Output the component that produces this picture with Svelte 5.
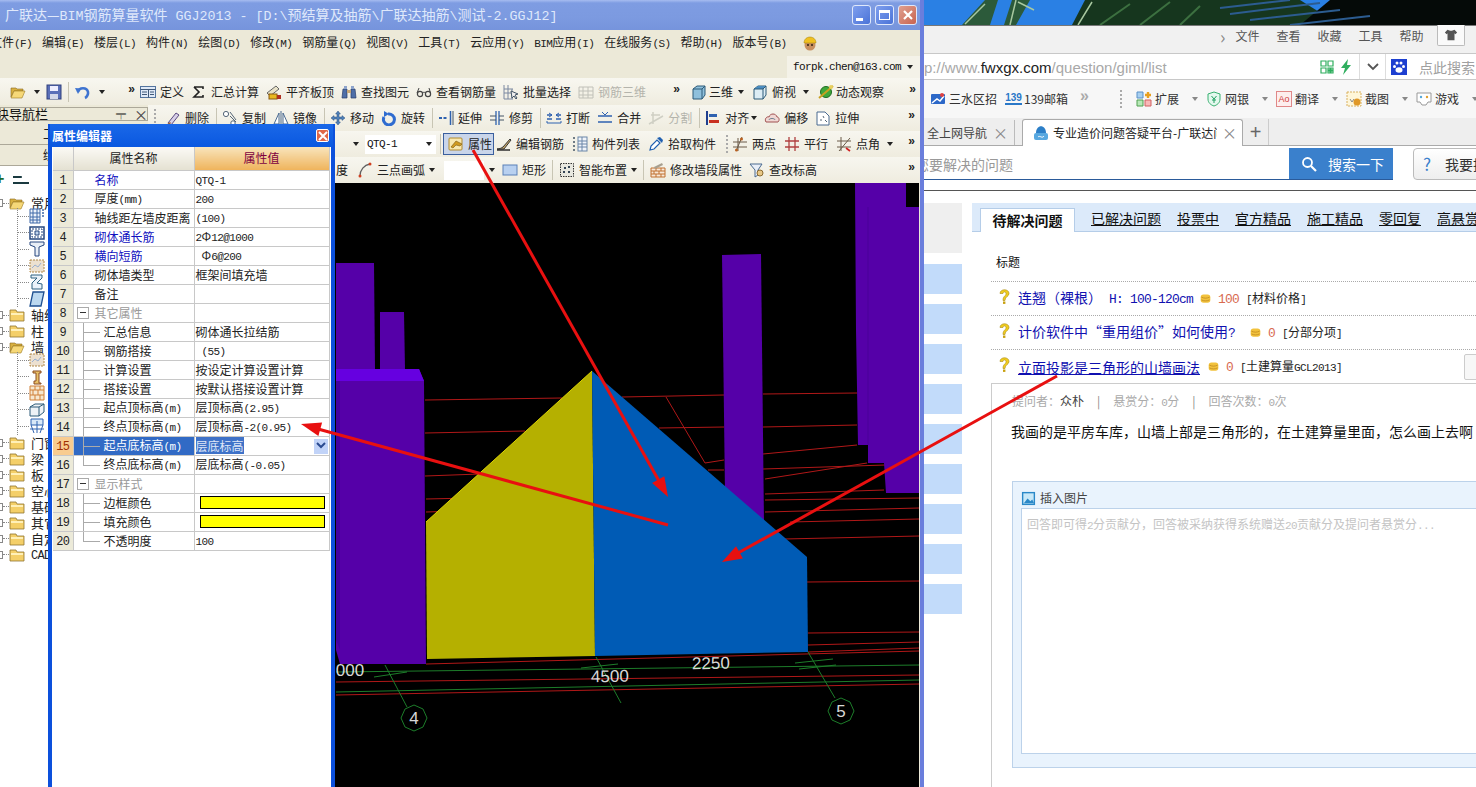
<script>
  const icons = {
    folder: '<path d="M1 4h5l1 1h6v2H4L1 13z" fill="#d8b040" stroke="#8a6a20" stroke-width=".6"/><path d="M1 14l3-7h11l-3 7z" fill="#f6d878" stroke="#9a7820" stroke-width=".6"/>',
    closed: '<path d="M1 3h6l1 2h7v9H1z" fill="#f4cf68" stroke="#8f7530" stroke-width=".8"/><path d="M2 6h12v2H2z" fill="#fff0b8"/>',
    save: '<rect x="1" y="1" width="14" height="14" fill="#5a6fb8" stroke="#30407c"/><rect x="4" y="2" width="8" height="5" fill="#eef"/><rect x="4" y="10" width="8" height="5" fill="#d4d8e8"/>',
    undo: '<path d="M3 8c1-5 9-5 10 0 .4 2-1 5-3 6" fill="none" stroke="#3f74d0" stroke-width="2.6"/><path d="M0 4l6 .5L3 10z" fill="#3f74d0"/>',
    define: '<rect x=".5" y="2.5" width="15" height="11" fill="#dfe9f7" stroke="#54749e"/><path d="M.5 5.5h15M8.5 5.5v8M10 8h4M10 10.5h4M2 8h5M2 10.5h5" stroke="#3f5878"/>',
    sigma: '<path d="M3 3h9v2M3 3l5 5-5 5h9v-2" fill="none" stroke="#222" stroke-width="1.6"/>',
    level: '<path d="M1 9l9-7 3 3-9 7z" fill="#e8e2c8" stroke="#666"/><rect x="3" y="10" width="8" height="5" fill="#e8b820" stroke="#8a5a10"/><rect x="11" y="11" width="4" height="4" fill="#b03020"/>',
    binoc: '<path d="M2 5h4v9H1zM10 5h4l1 9h-5z" fill="#4f6fa8" stroke="#283c68" stroke-width=".7"/><rect x="3" y="2" width="3" height="3" fill="#8ea4cc"/><rect x="10" y="2" width="3" height="3" fill="#8ea4cc"/><rect x="6" y="6" width="4" height="3" fill="#c8a878"/>',
    glasses: '<circle cx="4" cy="10" r="2.6" fill="none" stroke="#444" stroke-width="1.2"/><circle cx="12" cy="10" r="2.6" fill="none" stroke="#444" stroke-width="1.2"/><path d="M6.5 9c1-1 2-1 3 0M1 9l2-5M14.5 9L13 4" fill="none" stroke="#444"/>',
    batch: '<path d="M1 1v14h9M1 5h9M1 9h9M5 1v14M9 5v10" fill="none" stroke="#7a88a0"/><path d="M8 7l7 3-3 1 2 3-1 1-2-3-2 2z" fill="#eee" stroke="#456"/>',
    grid3d: '<path d="M1 3v11h14V3zM1 7h14M1 11h14M5 3v11M10 3v11" fill="none" stroke="#c0c0b8"/>',
    cube: '<path d="M2 5l4-3h8v9l-3 4H2z" fill="#8fc0dc" stroke="#2c5a78"/><path d="M2 5h9v10M11 5l3-3" fill="none" stroke="#2c5a78"/>',
    cubetop: '<path d="M2 5l4-3h8v9l-3 4H2z" fill="#dcecf4" stroke="#2c5a78"/><path d="M2 5l4-3h8l-3 3z" fill="#4a8cc0"/><path d="M2 5h9v10M11 5l3-3" fill="none" stroke="#2c5a78"/>',
    orbit: '<circle cx="8" cy="8" r="5.5" fill="#3fa83a" stroke="#1f6c20"/><path d="M1 14L15 2" stroke="#c8a020" stroke-width="2"/><circle cx="13" cy="3" r="2" fill="#e8d060"/>',
    erase: '<path d="M3 13l8-10 3 2-8 10z" fill="#d8d0e8" stroke="#5a4a80"/><path d="M1 15l4-3 1 1-3 3z" fill="#a06030"/>',
    copy: '<circle cx="4" cy="4" r="2.6" fill="#fff" stroke="#567"/><path d="M8 6l6 6M8 2l6 8" stroke="#567" fill="none"/><circle cx="11" cy="13" r="2.2" fill="#fff" stroke="#567"/>',
    mirror: '<path d="M1 14L6 3v11zM15 14L10 3v11z" fill="#fff" stroke="#4a6a90"/><path d="M8 1v14" stroke="#4a6a90"/>',
    move: '<path d="M8 1l2.4 3H9v3h3V5.6L15 8l-3 2.4V9H9v3h1.4L8 15l-2.4-3H7V9H4v1.4L1 8l3-2.4V7h3V4H5.600z" fill="#4f80b8" stroke="#2c5080" stroke-width=".5"/>',
    rotate: '<path d="M3 7a5.500 5.500 0 1 0 4-3" fill="none" stroke="#2f6cd0" stroke-width="3"/><path d="M3 1l5 3-5 3z" fill="#2f6cd0"/>',
    extend: '<path d="M1 8h9" stroke="#2f62b0" stroke-width="2" stroke-dasharray="3 1.500"/><path d="M12.500 1v14" stroke="#2f62b0" stroke-width="1.500"/><path d="M15 1v14" stroke="#456" />',
    trim: '<path d="M7 1v14M10 1v14" stroke="#2f62b0" stroke-width="1.300"/><path d="M1 6h6M1 10h6M10 6h5M10 10h5" stroke="#456"/>',
    split: '<path d="M1 13h14M1 13v-2M15 13v-2" stroke="#2f62b0" fill="none"/><path d="M1 5h5M10 5h5M1 9h5M10 9h5" stroke="#2f62b0" stroke-width="1.500"/><path d="M3 3l3 2-3 2M13 3l-3 2 3 2" stroke="#2f62b0" fill="none"/>',
    merge: '<path d="M1 6h14M1 12h14" stroke="#2f62b0" stroke-width="1.500"/><path d="M5 2l3 3 3-3" stroke="#2f62b0" fill="none"/>',
    cut: '<path d="M1 14l14-8M3 5h9M5 2v12" stroke="#cfcfc4" stroke-width="1.500" fill="none"/>',
    align: '<path d="M2 1v14" stroke="#1f3f8f" stroke-width="2"/><path d="M4 4h8v3H4z" fill="#2f62b0"/><path d="M4 10h10v3H4z" fill="#c83020"/>',
    offset: '<path d="M2 12c-2-3 1-6 3-5 1-4 7-4 8 0 2 0 3 3 1 5z" fill="#f0d8d4" stroke="#a05050"/><path d="M5 10c0-2 6-2 6 0" fill="none" stroke="#708090"/>',
    stretch: '<path d="M2 2h8l4 4v9H2z" fill="#fff" stroke="#4a6a90"/><path d="M8 6l1 2M10 10l2 2M5 10h2" stroke="#567"/>',
    prop: '<rect x="1" y="2" width="13" height="12" rx="1" fill="#f8e8b0" stroke="#b08a30"/><path d="M3 11l5-6 6 3-2 2-4-1-3 3z" fill="#d09a20" stroke="#7a5a10" stroke-width=".6"/>',
    bar: '<path d="M1 13c3 0 4-1 6-2l7-8 1 1-7 9z" fill="#c8a868" stroke="#333"/><path d="M1 14h13" stroke="#222" stroke-width="1.400"/>',
    list: '<path d="M1 2h2M1 6h2M1 10h2M1 14h2" stroke="#456" stroke-width="1.500"/><rect x="6" y="1" width="9" height="14" fill="#f0f4fa" stroke="#6a86a8"/><path d="M6 5h9M6 8h9M6 11h9M10 1v14" stroke="#6a86a8"/>',
    pick: '<path d="M2 14l1-4 6-6 3 3-6 6z" fill="#fff" stroke="#1f5fb0" stroke-width="1.200"/><path d="M9 2l5 5 1-3-3-3z" fill="#1f5fb0"/>',
    two: '<path d="M1 11h14M1 6h14M6 2v13M10 1L4 15" stroke="#6a5a48" fill="none"/><circle cx="9.500" cy="3" r="1.500" fill="#b86020"/><circle cx="4.500" cy="14" r="1.500" fill="#b86020"/>',
    parallel: '<path d="M1 5h14M1 11h14M5 1v14M11 1v14" stroke="#b04040" stroke-width="1.300" fill="none"/>',
    angle: '<path d="M1 5h14M1 11h14M5 1v14M14 2L3 15" stroke="#6a5a48" fill="none"/><path d="M10 12l4 3" stroke="#d02020" stroke-width="1.600"/>',
    arc: '<path d="M3 14C3 8 7 3 13 2" fill="none" stroke="#606060" stroke-width="1.300"/><circle cx="3" cy="14" r="1.500" fill="#d04020"/><circle cx="13" cy="2" r="1.500" fill="#d04020"/>',
    rect: '<rect x="1" y="3" width="14" height="10" fill="#b8d0f0" stroke="#5a80b8"/>',
    smart: '<rect x="1.500" y="1.500" width="13" height="13" fill="#e8e8e0" stroke="#333" stroke-dasharray="1.500 1"/><path d="M5 5h2v2H5zM9 9h2v2H9zM9 4h2v2H9zM4 9h2v2H4z" fill="#345"/>',
    wall: '<path d="M1 6h14v9H1z" fill="#f8e8d8" stroke="#c07030"/><path d="M1 9h14M1 12h14M6 6v3M11 6v3M4 9v3M9 9v3M6 12v3M11 12v3" stroke="#c07030"/><path d="M4 5l8-4 1 2-8 4z" fill="#a8a090"/>',
    elev: '<path d="M1 2h12L9 8v5l-3 2V8z" fill="#e8eef8" stroke="#4a6a90"/><circle cx="11" cy="11" r="3" fill="#e8c888" stroke="#8a6a30"/>',
    grid: '<path d="M1 1h10v14H1zM1 5h10M1 9h10M1 12h10M4 1v14M8 1v14" fill="#eef3fb" stroke="#3f68a8"/><path d="M13 2h2M13 5h2M13 8h2" stroke="#3f68a8" stroke-width="1.500"/>',
    frame: '<path d="M1 2h14v12H1z" fill="none" stroke="#26477f" stroke-width="1.500"/><path d="M3 4h10v8H3z" fill="none" stroke="#26477f" stroke-dasharray="2 1"/><path d="M6 6h4v4H6z" fill="#c0d4ec" stroke="#26477f"/>',
    tee: '<path d="M1 1h14v3l-5 2v9H6V6L1 4z" fill="#e8eef6" stroke="#26477f"/>',
    brick: '<rect x="1" y="2" width="14" height="12" fill="#ece0d0" stroke="#b08848" stroke-dasharray="2 1"/><path d="M3 10l3-3 3 2 3-4" stroke="#9ab0d0" fill="none"/>',
    zig: '<path d="M2 1h11v3L8 9l5 1v5H3V9l5-5H2z" fill="#eaf2fa" stroke="#2c6080"/>',
    slab: '<path d="M4 1h11l-3 14H1z" fill="#bcd8f0" stroke="#1f4f90" stroke-width="1.300"/>',
    pillar: '<path d="M4 2h8v2h-2v10h2v1H5v-3h2V4H4z" fill="#e8c068" stroke="#8a4a20"/>',
    bricks: '<path d="M1 1h14v14H1z" fill="#f6e8d0" stroke="#d08038"/><path d="M1 5h14M1 10h14M6 1v4M11 1v4M4 5v5M9 5v5M6 10v5M11 10v5" stroke="#d08038"/>',
    box: '<path d="M1 5l5-3h9v8l-5 4H1z" fill="#eef2f6" stroke="#2c5a78"/><path d="M1 5h9v9M10 5l5-3" fill="none" stroke="#2c5a78"/>',
    hole: '<path d="M2 1h12v6H2z" fill="#d8e8f8" stroke="#2f62b0"/><path d="M2 7l3 8M14 7l-3 8M1 11h14M8 3v12" stroke="#2f62b0" fill="none"/>',
    fav: '<rect x="1" y="3" width="14" height="10" rx="1" fill="#2c68c8"/><path d="M2 12l5-4 3 2 4-5" stroke="#fff" stroke-width="1.500" fill="none"/><circle cx="12" cy="4" r="2" fill="#e04040"/>',
    ext: '<path d="M1 1h6v6H1z" fill="#a8d0f0" stroke="#5a90c8"/><path d="M9 9h6v6H9z" fill="#f8b8b8" stroke="#d06060"/><path d="M1 9h6v6H1z" fill="#b8e8b8" stroke="#50a050"/><path d="M12 1v6M9 4h6" stroke="#e8a020" stroke-width="2.400"/>',
    shield: '<path d="M8 1l6 2v5c0 4-3 6-6 7-3-1-6-3-6-7V3z" fill="#e4f8ee" stroke="#38b070"/><path d="M5.500 5L8 8l2.500-3M8 8v4M6 9h4" stroke="#20a060" fill="none"/>',
    shot: '<rect x="1" y="1" width="14" height="14" fill="#fff6d8" stroke="#d8b060" stroke-dasharray="2 1"/><circle cx="11" cy="11" r="3.500" fill="#e09828"/><path d="M4 8l2 3 2-3" stroke="#888" fill="none"/>',
    game: '<path d="M1 2h14v9h-3l-2 3H6l-2-3H1z" fill="#fff" stroke="#999"/><circle cx="5" cy="6" r="1.200" fill="#58a8d8"/><circle cx="11" cy="6" r="1.200" fill="#e0a030"/>',
    tabico: '<path d="M3 8c0-9 10-9 10 0z" fill="#2c7fc8"/><rect x="1" y="8" width="14" height="7" rx="2" fill="#58a8e0"/><path d="M5 12c2-2 4 2 6-1" stroke="#fff" fill="none"/>',
    picture: '<rect x="1" y="1" width="14" height="14" fill="#2a88c8"/><rect x="2.500" y="2.500" width="11" height="11" fill="#c8e8f8"/><path d="M3 13l4-5 3 3 2-2 2 4z" fill="#2a88c8"/>',
    coin: '<rect x="1" y="2" width="14" height="12" rx="4" fill="#f2c23c"/><path d="M2 6c4 2 8 2 12 0M2 10c4 2 8 2 12 0" stroke="#b8801c" fill="none"/>',
    q: '<path d="M4 5c0-5 9-5 9 0 0 3-4 3-4 7H7c0-5 3-4 3-7 0-2-3-2-3 0z" fill="#f0cc20" stroke="#a88810" stroke-width=".6"/><rect x="7" y="13" width="2.400" height="2.400" fill="#c8a010"/>'
  };

  const menus = ['文件(F)', '编辑(E)', '楼层(L)', '构件(N)', '绘图(D)', '修改(M)', '钢筋量(Q)', '视图(V)', '工具(T)', '云应用(Y)', 'BIM应用(I)', '在线服务(S)', '帮助(H)', '版本号(B)'];

  const row3 = [
    { i: 'define', t: '定义' }, { i: 'sigma', t: '汇总计算' }, { i: 'level', t: '平齐板顶' }, { i: 'binoc', t: '查找图元' },
    { i: 'glasses', t: '查看钢筋量' }, { i: 'batch', t: '批量选择' }, { i: 'grid3d', t: '钢筋三维', off: true }
  ];
  const row4 = [
    { i: 'erase', t: '删除' }, { sep: true }, { i: 'copy', t: '复制' }, { i: 'mirror', t: '镜像' }, { sep: true },
    { i: 'move', t: '移动' }, { i: 'rotate', t: '旋转' }, { sep: true }, { i: 'extend', t: '延伸' }, { i: 'trim', t: '修剪' }, { sep: true },
    { i: 'split', t: '打断' }, { i: 'merge', t: '合并' }, { i: 'cut', t: '分割', off: true }, { sep: true },
    { i: 'align', t: '对齐', caret: true }, { i: 'offset', t: '偏移' }, { i: 'stretch', t: '拉伸' }
  ];
  const row5 = [
    { i: 'bar', t: '编辑钢筋' }, { i: 'list', t: '构件列表' }, { i: 'pick', t: '拾取构件' }, { dots: true },
    { i: 'two', t: '两点' }, { i: 'parallel', t: '平行' }, { i: 'angle', t: '点角', caret: true }
  ];
  const row6 = [
    { i: 'rect', t: '矩形' }, { sep: true }, { i: 'smart', t: '智能布置', caret: true }, { sep: true },
    { i: 'wall', t: '修改墙段属性' }, { i: 'elev', t: '查改标高' }
  ];

  const tree = [
    { t: '常用构件类型', open: true, kids: ['grid', 'frame', 'tee', 'brick', 'zig', 'slab'] },
    { t: '轴线' }, { t: '柱' },
    { t: '墙', open: true, kids: ['brick', 'pillar', 'bricks', 'box', 'hole'] },
    { t: '门窗洞' }, { t: '梁' }, { t: '板' }, { t: '空心楼盖' }, { t: '基础' }, { t: '其它' }, { t: '自定义' }, { t: 'CAD识别' }
  ];

  const props = [
    { n: '名称', v: 'QTQ-1', blue: true },
    { n: '厚度(mm)', v: '200' },
    { n: '轴线距左墙皮距离', v: '(100)' },
    { n: '砌体通长筋', v: '2Φ12@1000', blue: true },
    { n: '横向短筋', v: ' Φ6@200', blue: true },
    { n: '砌体墙类型', v: '框架间填充墙' },
    { n: '备注', v: '' },
    { n: '其它属性', group: true },
    { n: '汇总信息', v: '砌体通长拉结筋', sub: true },
    { n: '钢筋搭接', v: ' (55)', sub: true },
    { n: '计算设置', v: '按设定计算设置计算', sub: true },
    { n: '搭接设置', v: '按默认搭接设置计算', sub: true },
    { n: '起点顶标高(m)', v: '层顶标高(2.95)', sub: true },
    { n: '终点顶标高(m)', v: '层顶标高-2(0.95)', sub: true },
    { n: '起点底标高(m)', v: '层底标高', sub: true, sel: true },
    { n: '终点底标高(m)', v: '层底标高(-0.05)', sub: true, last: true },
    { n: '显示样式', group: true },
    { n: '边框颜色', color: true, sub: true },
    { n: '填充颜色', color: true, sub: true },
    { n: '不透明度', v: '100', sub: true, last: true }
  ];

  const bookmarks = [
    { i: 'ext', t: '扩展' }, { i: 'shield', t: '网银' }, { i: 'ao', t: '翻译' }, { i: 'shot', t: '截图' }, { i: 'game', t: '游戏' }
  ];

  const pageTabs = ['已解决问题', '投票中', '官方精品', '施工精品', '零回复', '高悬赏'];

  const questions = [
    { t: '连翘（裸根） H: 100-120cm', pts: '100', cat: '[材料价格]', gap: 'g1' },
    { t: '计价软件中“重用组价”如何使用?', pts: '0', cat: '[分部分项]', gap: 'g2' },
    { t: '立面投影是三角形的山墙画法', pts: '0', cat: '[土建算量GCL2013]', gap: 'g3', link: true }
  ];

  const strips = [1, 2, 3, 4, 5, 6, 7, 8, 9];

  // latin runs are set apart so they get the narrow half-width of a bitmap song face
  function runs(s) {
    return (s.match(/[\x00-\x7f]+|[^\x00-\x7f]+/g) || []).map((x) => ({ s: x, lat: /^[\x00-\x7f]/.test(x) }));
  }
</script>

{#snippet mix(s)}{#each runs(s) as r}{#if r.lat}<span class="lat">{r.s}</span>{:else}{r.s}{/if}{/each}{/snippet}

{#snippet ic(n)}<svg class="ic" viewBox="0 0 16 16">{@html icons[n]}</svg>{/snippet}

{#snippet tools(list)}
  {#each list as it}
    {#if it.sep}
      <span class="sep"></span>
    {:else if it.dots}
      <span class="dots"></span>
    {:else}
      <span class="tool" class:off={it.off}>
        {@render ic(it.i)}
        <span>{it.t}</span>
        {#if it.caret}<span class="caret"></span>{/if}
      </span>
    {/if}
  {/each}
{/snippet}

<div class="desktop">
  <svg class="palms" viewBox="924 0 552 25" preserveAspectRatio="none">
    <rect x="924" y="0" width="552" height="25" fill="#2a80e4" />
    <path d="M1072 25L1085 0H1300L1340 25z" fill="#16361e" />
    <path d="M1330 0H1476V25H1300z" fill="#050a08" />
    <path d="M1220 8L1290 0M1230 14L1320 3M1250 20L1340 10M1290 25L1370 16" stroke="#2c5c90" stroke-width="2" />
    <path d="M962 25L985 0H998L990 25zM1004 25L1012 0H1030L1016 25z" fill="#2c5a3a" />
    <path d="M1010 25L1016 0M1018 2L1034 10M965 24L985 4M1078 25L1092 2" stroke="#a8c8a0" stroke-width="1.500" fill="none" />
    <path d="M1100 25L1130 4M1140 25L1170 2M1180 25L1200 6" stroke="#3c7040" stroke-width="2" />
  </svg>

  <!-- browser behind the app window -->
  <div class="browser">
    <div class="b-menu">
      <span class="chev">›</span>
      <span>文件</span><span>查看</span><span>收藏</span><span>工具</span><span>帮助</span>
      <span class="shirt"><svg viewBox="0 0 16 16" width="14" height="14"><path d="M4 2l3 1h2l3-1 3 3-2 2-1-1v8H4V6L3 7 1 5z" fill="#555" /></svg></span>
    </div>
    <div class="b-addr">
      <span class="url">p://www.<b>fwxgx.com</b>/question/giml/list</span>
      <svg class="qr" viewBox="0 0 14 14" width="14" height="14"><path d="M1 1h5v5H1zM8 1h5v5H8zM1 8h5v5H1zM8 8h2v2H8zM11 8h2v2h-2zM8 11h2v2H8zM11 11h2v2h-2z" fill="none" stroke="#2fae5e" stroke-width="1.200" /></svg>
      <svg class="bolt" viewBox="0 0 12 16" width="12" height="16"><path d="M8 0L1 9h4l-2 7 8-10H7z" fill="#2fae5e" /></svg>
      <span class="vbar"></span>
      <svg class="down" viewBox="0 0 12 8" width="12" height="8"><path d="M1 1l5 5 5-5" fill="none" stroke="#555" stroke-width="1.800" /></svg>
      <span class="vbar"></span>
      <svg class="paw" viewBox="0 0 16 16" width="16" height="16"><rect width="16" height="16" fill="#1d3fd0" /><ellipse cx="8" cy="11" rx="3.500" ry="2.800" fill="#fff" /><circle cx="3.500" cy="7.500" r="1.500" fill="#fff" /><circle cx="12.500" cy="7.500" r="1.500" fill="#fff" /><circle cx="6" cy="4" r="1.500" fill="#fff" /><circle cx="10" cy="4" r="1.500" fill="#fff" /></svg>
      <span class="hint">点此搜索</span>
    </div>
    <div class="b-bar">
      <span class="bm first">{@render ic('fav')}<span>三水区招</span></span>
      <span class="bm mail"><span class="n139">139</span><span>139邮箱</span></span>
      <span class="more grey">»</span>
      <span class="dots"></span>
      {#each bookmarks as b}
        <span class="bm wide">
          {#if b.i === 'ao'}<span class="ao">Ao</span>{:else}{@render ic(b.i)}{/if}
          <span>{b.t}</span>
          <span class="caret grey"></span>
        </span>
      {/each}
    </div>
    <div class="b-tabs">
      <span class="tab off">全上网导航<i>×</i></span>
      <span class="tab on">{@render ic('tabico')}<span class="tabtext">专业造价问题答疑平台-广联达问</span><i>×</i></span>
      <span class="plus">+</span>
    </div>
    <div class="search">
      <div class="input">您要解决的问题</div>
      <div class="go">
        <svg viewBox="0 0 16 16" width="16" height="16"><circle cx="6.500" cy="6.500" r="4.500" fill="none" stroke="#fff" stroke-width="1.800" /><path d="M10 10l5 5" stroke="#fff" stroke-width="2.200" /></svg>
        <span>搜索一下</span>
      </div>
      <div class="ask"><b>?</b><span>我要提问</span></div>
    </div>
    <div class="page">
      <div class="rail">
        <div class="grey-block"></div>
        {#each strips as s (s)}<div class="strip"></div>{/each}
      </div>
      <div class="content">
        <div class="p-tabs">
          <span class="p-on">待解决问题</span>
          {#each pageTabs as t}<span class="p-link">{t}</span>{/each}
        </div>
        <div class="head">标题</div>
        <div class="qlist">
          {#each questions as q}
            <div class="q">
              <svg class="qm" viewBox="0 0 16 16">{@html icons.q}</svg>
              <span class="qt {q.gap}" class:link={q.link}>{@render mix(q.t)}</span>
              <svg class="coin" viewBox="0 0 16 16">{@html icons.coin}</svg>
              <span class="pts">{@render mix(q.pts)}</span>
              <span class="cat">{@render mix(q.cat)}</span>
              {#if q.link}<span class="stub"></span>{/if}
            </div>
          {/each}
        </div>
        <div class="detail">
          <div class="meta">
            <span>提问者：<em>众朴</em></span><span class="bar">|</span><span>悬赏分：{@render mix('0')}分</span><span class="bar">|</span><span>回答次数：{@render mix('0')}次</span>
          </div>
          <div class="body">我画的是平房车库，山墙上部是三角形的，在土建算量里面，怎么画上去啊</div>
          <div class="editor">
            <div class="ed-head">{@render ic('picture')}<span>插入图片</span></div>
            <div class="ed-area">{@render mix('回答即可得2分贡献分，回答被采纳获得系统赠送20贡献分及提问者悬赏分...')}</div>
          </div>
        </div>
      </div>
    </div>
  </div>

  <!-- the estimating app -->
  <div class="app">
    <div class="titlebar">
      <span class="title">{@render mix('广联达—BIM钢筋算量软件 GGJ2013 - [D:\\预结算及抽筋\\广联达抽筋\\测试-2.GGJ12]')}</span>
      <span class="winbtns">
        <span class="wb"><i class="w-min"></i></span>
        <span class="wb"><i class="w-max"></i></span>
        <span class="wb close">
          <svg viewBox="0 0 12 12" width="12" height="12"><path d="M2 2l8 8M10 2l-8 8" stroke="#fff" stroke-width="2.200" /></svg>
        </span>
      </span>
    </div>
    <div class="menu">
      {#each menus as m}<span>{@render mix(m)}</span>{/each}
      <svg class="face" viewBox="0 0 16 16" width="16" height="16"><circle cx="8" cy="10" r="5.500" fill="#c89060" /><path d="M2 8c0-8 12-8 12 0z" fill="#f0c020" stroke="#a08010" stroke-width=".5" /><circle cx="6" cy="10" r="1" fill="#321" /><circle cx="10" cy="10" r="1" fill="#321" /></svg>
    </div>
    <div class="acct"><span class="email">{@render mix('forpk.chen@163.com')}<span class="caret"></span></span></div>

    <div class="bar3">
      <div class="band b1">
        <span class="tool bare">{@render ic('folder')}<span class="caret"></span></span>
        <span class="tool bare saveit">{@render ic('save')}</span>
        <span class="sep"></span>
        <span class="tool bare">{@render ic('undo')}<span class="caret"></span></span>
        <span class="more">»</span>
      </div>
      <div class="band b2">
        {@render tools(row3)}
        <span class="more">»</span>
      </div>
      <div class="band b3">
        <span class="tool first">{@render ic('cube')}<span>三维</span><span class="caret"></span></span>
        <span class="tool">{@render ic('cubetop')}<span>俯视</span><span class="caret"></span></span>
        <span class="tool orb">{@render ic('orbit')}<span>动态观察</span></span>
        <span class="more">»</span>
      </div>
    </div>

    <div class="work">
      <div class="nav">
        <div class="nav-head"><span class="nh-t">块导航栏</span><span class="pin">╤</span><span class="nh-x">×</span></div>
        <div class="nav-tab">工程设置</div>
        <div class="nav-tab">绘图输入</div>
        <div class="nav-tools"><span class="plusg">+</span><span class="minus"></span></div>
        <div class="tree">
          {#each tree as n}
            <div class="node">
              <span class="expander"></span><span class="dash"></span>
              <svg class="ic" viewBox="0 0 16 16">{@html n.open ? icons.folder : icons.closed}</svg>
              <span class="nlabel">{@render mix(n.t)}</span>
            </div>
            {#if n.kids}
              <div class="kids">
                {#each n.kids as k}
                  <div class="kid"><span class="dash long"></span>{@render ic(k)}</div>
                {/each}
              </div>
            {/if}
          {/each}
        </div>
      </div>

      <div class="main">
        <div class="tb r4">
          <span class="dots"></span>
          {@render tools(row4)}
          <span class="more">»</span>
        </div>
        <div class="tb r5">
          <span class="caret"></span>
          <span class="combo">{@render mix('QTQ-1')}<span class="caret"></span></span>
          <span class="sep"></span>
          <span class="tool active">{@render ic('prop')}<span>属性</span></span>
          {@render tools(row5)}
          <span class="more">»</span>
        </div>
        <div class="tb r6">
          <span class="cut-label">度</span>
          <span class="tool">{@render ic('arc')}<span>三点画弧</span><span class="caret"></span></span>
          <span class="blank"></span><span class="caret"></span>
          {@render tools(row6)}
          <span class="more">»</span>
        </div>

        <svg class="scene" viewBox="148 183 771 604">
          <rect x="148" y="183" width="771" height="604" fill="#000" />
          <!-- grid behind the walls -->
          <g stroke="#b01818" stroke-width="1" fill="none">
            <path d="M425 400L562 398M622 397L724 395M763 394L857 393" />
            <path d="M425 433L525 431M659 428L724 427M763 427L857 425" />
            <path d="M425 476L480 474M705 463L724 460M763 454L857 445" />
            <path d="M708 470L724 470M763 469L885 465M765 494L884 490M765 500L919 498M765 512L919 508" />
            <path d="M790 522L919 519M784 539L919 536M807 582L919 581M808 633L919 632M808 645L919 642M808 652L919 648" />
            <path d="M426 499L470 498M426 512L460 511" />
            <path d="M666 397L705 463M765 479L867 463" />
            <path d="M336 682L919 675M336 695L919 684M426 664L919 651" />
          </g>
          <g stroke="#1d7d2a" stroke-width="1" fill="none">
            <path d="M336 672L919 665M336 692L919 680" />
            <path d="M374 677L407 672M581 668L618 664M795 663L833 659M799 669L836 665" />
            <path d="M385 665L407 707M596 657L621 703M808 652L835 698" />
            <polygon points="414,705 423,709 427,718 423,727 414,731 405,727 401,718 405,709" />
            <polygon points="841,698 850,702 854,711 850,720 841,724 832,720 828,711 832,702" />
          </g>
          <!-- columns -->
          <g fill="#5500a8">
            <path d="M336 263H374L375 370H336z" />
            <path d="M380 312H404L405 370H380z" />
            <path d="M722 255L761 254L764 525L725 495z" />
            <path d="M855 183H906V207H884V445H858L856 330z" />
            <path d="M884 207H919V493H886L884 463H868V445H884z" />
            <path d="M336 369H419L424 381L426 664H340L336 650z" />
          </g>
          <path d="M336 369H419L424 381H336z" fill="#6600e0" />
          <path d="M336 381H340V650L336 640z" fill="#4400a0" />
          <path d="M868 207V445" stroke="#4a0098" />
          <!-- the wall itself -->
          <polygon points="592,371 426,522 427,659 595,656" fill="#b5b000" />
          <polygon points="592,371 807,557 808,652 595,656" fill="#005bb5" />
          <path d="M426 522L592 371" stroke="#dcd400" stroke-width="1" />
          <g class="dims" fill="#d8d8d8">
            <text x="610" y="682" text-anchor="middle" transform="rotate(-1 610 682)">4500</text>
            <text x="711" y="669" text-anchor="middle" transform="rotate(-1 711 669)">2250</text>
            <text x="350" y="676" text-anchor="middle">000</text>
            <text x="414" y="724" text-anchor="middle">4</text>
            <text x="841" y="717" text-anchor="middle">5</text>
          </g>
        </svg>
      </div>
    </div>

    <!-- property editor dialog -->
    <div class="dialog">
      <div class="d-title">
        <span>属性编辑器</span>
        <span class="d-close"><svg viewBox="0 0 10 10" width="10" height="10"><path d="M1 1l8 8M9 1l-8 8" stroke="#fff" stroke-width="2" /></svg></span>
      </div>
      <table>
        <colgroup><col class="c0" /><col class="c1" /><col class="c2" /></colgroup>
        <thead>
          <tr><th></th><th>属性名称</th><th class="hv">属性值</th></tr>
        </thead>
        <tbody>
          {#each props as p, idx}
            <tr>
              <td class="num" class:cur={p.sel}>{@render mix(String(idx + 1))}</td>
              <td class="name" class:blue={p.blue} class:group={p.group} class:sub={p.sub} class:last={p.last} class:cur={p.sel}>
                {#if p.group}<span class="minusbox"></span>{/if}
                {@render mix(p.n)}
              </td>
              <td class="val">
                {#if p.color}
                  <span class="swatch"></span>
                {:else if p.sel}
                  <span class="picked">{p.v}</span>
                  <span class="drop"><svg viewBox="0 0 10 8" width="10" height="8"><path d="M1 1l4 4 4-4" fill="none" stroke="#2a4a90" stroke-width="2" /></svg></span>
                {:else if p.v}
                  {@render mix(p.v)}
                {/if}
              </td>
            </tr>
          {/each}
        </tbody>
      </table>
    </div>
  </div>

  <!-- red annotation arrows drawn over everything -->
  <svg class="marks" viewBox="0 0 1476 787">
    <g stroke="#e81010" stroke-width="3" fill="none">
      <path d="M473 150L659 481" />
      <path d="M668 525L318 429" />
      <path d="M1057 376L738 553" />
    </g>
    <g fill="#e81010">
      <polygon points="668,497 664.300,476.200 652.100,483" />
      <polygon points="301,424 322.100,422.500 318.400,436" />
      <polygon points="722,562 742.900,558.400 736.100,546.200" />
    </g>
  </svg>
</div>

<style>
  :global(body) {
    margin: 0;
    background: #000;
  }

  .desktop {
    position: relative;
    width: 1476px;
    height: 787px;
    overflow: hidden;
    font-family: "Noto Sans CJK SC", sans-serif;
    font-size: 12px;
    line-height: 16px;
    color: #111;
  }

  .lat {
    font-family: "Liberation Mono", monospace;
    font-size: 0.92em;
    letter-spacing: -0.056em;
    white-space: pre;
  }

  .ic {
    width: 16px;
    height: 16px;
    flex: none;
  }

  .palms {
    position: absolute;
    left: 924px;
    top: 0;
    width: 552px;
    height: 25px;
  }

  .marks {
    position: absolute;
    inset: 0;
    width: 1476px;
    height: 787px;
    pointer-events: none;
  }

  .caret {
    display: inline-block;
    width: 0;
    height: 0;
    border: 3.5px solid transparent;
    border-top: 4px solid #222;
    border-bottom: 0;
    flex: none;
  }

  .caret.grey {
    border-top-color: #888;
  }

  /* browser */
  .browser {
    position: absolute;
    left: 924px;
    top: 25px;
    width: 552px;
    height: 762px;
    background: #fff;
    display: flex;
    flex-direction: column;
    overflow: hidden;
  }

  .b-menu {
    height: 29px;
    flex: none;
    box-sizing: border-box;
    background: #f1f1f1;
    border-top: 1px solid #777;
    border-bottom: 1px solid #c8c8c8;
    display: flex;
    align-items: flex-start;
    padding: 2px 0 0 296px;
    gap: 17px;
    color: #555;
    white-space: nowrap;
  }

  .chev {
    font-size: 18px;
    color: #888;
    margin-right: -7px;
  }

  .shirt {
    width: 26px;
    height: 20px;
    margin: -3px 0 0 -4px;
    border: 1px solid #bbb;
    border-top: 0;
    border-radius: 0 0 2px 2px;
    background: #fafafa;
    display: flex;
    align-items: center;
    justify-content: center;
    flex: none;
  }

  .b-addr {
    height: 26px;
    flex: none;
    box-sizing: border-box;
    border-bottom: 1px solid #c8c8c8;
    display: flex;
    align-items: center;
    white-space: nowrap;
  }

  .url {
    font-family: "Liberation Sans", sans-serif;
    font-size: 15px;
    color: #a8a8a8;
    width: 396px;
    flex: none;
    padding-top: 2px;
  }

  .url b {
    font-weight: normal;
    color: #222;
  }

  .qr {
    margin-right: 6px;
    flex: none;
  }

  .bolt {
    margin-right: 7px;
    flex: none;
  }

  .vbar {
    width: 1px;
    height: 25px;
    background: #ddd;
    flex: none;
  }

  .down {
    margin: 0 6px 0 7px;
    flex: none;
  }

  .paw {
    margin: 0 12px 0 5px;
    flex: none;
  }

  .hint {
    font-size: 14px;
    color: #a0a0a0;
  }

  .b-bar {
    height: 38px;
    flex: none;
    box-sizing: border-box;
    display: flex;
    align-items: center;
    background: #f7f7f7;
    color: #333;
    white-space: nowrap;
  }

  .bm {
    display: flex;
    align-items: center;
    gap: 3px;
    flex: none;
  }

  .bm.first {
    margin-left: 6px;
    width: 75px;
  }

  .bm.mail {
    width: 75px;
    gap: 2px;
  }

  .n139 {
    width: 17px;
    font: bold 10px "Liberation Sans", sans-serif;
    color: #2a78c8;
    border-bottom: 2px solid #2a78c8;
    flex: none;
    text-align: center;
    line-height: 10px;
  }

  .bm.wide {
    width: 70px;
    gap: 3px;
  }

  .bm.wide .caret {
    margin-left: 10px;
  }

  .more.grey {
    color: #aaa;
    font-size: 16px;
    margin: 0;
    width: 40px;
    flex: none;
  }

  .b-bar .dots {
    margin-right: 14px;
  }

  .ao {
    width: 14px;
    height: 14px;
    border: 1px solid #e08888;
    background: #fdeeee;
    color: #d04040;
    font: 9px/14px "Liberation Sans", sans-serif;
    text-align: center;
    flex: none;
  }

  .b-tabs {
    height: 28px;
    flex: none;
    box-sizing: border-box;
    border-bottom: 1px solid #aaa;
    background: #eeeeee;
    display: flex;
    align-items: flex-end;
    white-space: nowrap;
  }

  .tab {
    height: 27px;
    box-sizing: border-box;
    display: flex;
    align-items: center;
    position: relative;
    top: 1px;
    flex: none;
  }

  .tab i {
    font-style: normal;
    font-size: 15px;
    color: #888;
    flex: none;
  }

  .tab.off {
    width: 91px;
    padding-left: 3px;
    color: #444;
    border-right: 1px solid #bbb;
    margin-right: 7px;
    justify-content: space-between;
    padding-right: 6px;
    height: 25px;
    top: 0;
  }

  .tab.on {
    width: 221px;
    background: #fff;
    border: 1px solid #aaa;
    border-bottom: 0;
    border-radius: 3px 3px 0 0;
    padding: 0 10px;
    gap: 4px;
    color: #222;
  }

  .tabtext {
    width: 164px;
    flex: none;
    overflow: hidden;
  }

  .tab.on i {
    margin-left: 1px;
  }

  .plus {
    width: 25px;
    height: 26px;
    border-right: 1px solid #ccc;
    text-align: center;
    font: 20px/26px "Liberation Sans", sans-serif;
    color: #666;
    flex: none;
  }

  .search {
    height: 45px;
    flex: none;
    box-sizing: border-box;
    padding-top: 2px;
    border-bottom: 1px solid #555;
    display: flex;
    align-items: flex-start;
    white-space: nowrap;
  }

  .input {
    width: 365px;
    height: 32px;
    flex: none;
    box-sizing: border-box;
    border-bottom: 1px solid #2a5a9a;
    font-size: 14px;
    line-height: 32px;
    color: #999;
    text-indent: -9px;
  }

  .go {
    width: 104px;
    height: 32px;
    flex: none;
    box-sizing: border-box;
    background: #3a80cc;
    border-bottom: 1px solid #2a5a9a;
    color: #fff;
    font-size: 14px;
    display: flex;
    align-items: center;
    padding-left: 12px;
    gap: 11px;
  }

  .ask {
    margin-left: 20px;
    width: 90px;
    height: 32px;
    flex: none;
    box-sizing: border-box;
    border: 1px solid #bbb;
    border-radius: 4px;
    background: linear-gradient(#fff, #eee);
    display: flex;
    align-items: center;
    padding-left: 9px;
    gap: 14px;
    font-size: 14px;
    color: #333;
  }

  .ask b {
    font-weight: normal;
    color: #3a80cc;
    font-size: 17px;
  }

  .page {
    flex: 1;
    display: flex;
    min-height: 0;
  }

  .rail {
    width: 38px;
    flex: none;
    display: flex;
    flex-direction: column;
    gap: 10px;
  }

  .grey-block {
    height: 50px;
    margin-top: 12px;
    margin-bottom: 1px;
    background: #efefef;
  }

  .strip {
    height: 30px;
    background: #c2dbfa;
  }

  .content {
    flex: none;
    width: 514px;
    margin-left: 10px;
    padding-top: 12px;
    box-sizing: border-box;
  }

  .p-tabs {
    height: 29px;
    box-sizing: border-box;
    width: 504px;
    background: #dceafa;
    border-bottom: 1px solid #b5cde8;
    padding-left: 8px;
    display: flex;
    align-items: flex-end;
    gap: 16px;
    font-size: 14px;
    white-space: nowrap;
    color: #111;
  }

  .p-on {
    width: 95px;
    height: 24px;
    box-sizing: border-box;
    background: #fff;
    border: 1px solid #b5cde8;
    border-bottom: 0;
    font-weight: bold;
    text-align: center;
    line-height: 22px;
    position: relative;
    top: 1px;
    flex: none;
  }

  .p-link {
    text-decoration: underline;
    line-height: 26px;
    flex: none;
  }

  .head {
    height: 49px;
    padding-left: 24px;
    box-sizing: border-box;
    padding-top: 22px;
  }

  .qlist {
    margin-left: 19px;
  }

  .q {
    height: 34px;
    box-sizing: border-box;
    border-top: 1px dotted #aaa;
    display: flex;
    align-items: center;
    white-space: nowrap;
    position: relative;
  }

  .qm {
    width: 16px;
    height: 17px;
    margin: -4px 6px 0 5px;
    flex: none;
  }

  .qt {
    font-size: 14px;
    color: #1010b0;
    flex: none;
  }

  .qt.g1 {
    margin-right: 7px;
  }

  .qt.g2 {
    margin-right: 15px;
  }

  .qt.g3 {
    margin-right: 8px;
  }

  .qt.link {
    text-decoration: underline;
  }

  .coin {
    width: 11px;
    height: 11px;
    flex: none;
    margin-right: 7px;
  }

  .pts {
    font-size: 14px;
    color: #d86a50;
    margin-right: 7px;
    flex: none;
  }

  .cat {
    color: #222;
    flex: none;
  }

  .stub {
    position: absolute;
    left: 473px;
    top: 4px;
    width: 20px;
    height: 24px;
    border: 1px solid #ccc;
    border-radius: 2px;
    background: #f7f7f7;
  }

  .detail {
    margin-left: 19px;
    height: 420px;
    box-sizing: border-box;
    border-top: 1px solid #ccc;
    border-left: 1px solid #ccc;
    padding-left: 20px;
  }

  .meta {
    margin-top: 9px;
    color: #aaa;
    display: flex;
    white-space: nowrap;
    height: 16px;
  }

  .meta em {
    font-style: normal;
    color: #444;
  }

  .meta .bar {
    margin: 0 13px;
    color: #888;
  }

  .body {
    margin-top: 12px;
    font-size: 14px;
    line-height: 20px;
    white-space: nowrap;
    margin-left: -1px;
  }

  .editor {
    margin-top: 40px;
    height: 287px;
    box-sizing: border-box;
    border: 1px solid #bcd2ea;
    border-right: 0;
    background: #e9f3fd;
    padding-left: 8px;
    display: flex;
    flex-direction: column;
  }

  .ed-head {
    height: 26px;
    flex: none;
    display: flex;
    align-items: center;
    gap: 4px;
    color: #444;
    padding-top: 6px;
    box-sizing: border-box;
  }

  .ed-head .ic {
    width: 15px;
    height: 15px;
  }

  .ed-area {
    height: 246px;
    flex: none;
    box-sizing: border-box;
    background: #fff;
    border: 1px solid #bcd2ea;
    border-right: 0;
    padding: 7px 0 0 5px;
    color: #c4c4c4;
    white-space: nowrap;
  }

  /* app window */
  .app {
    position: absolute;
    left: 0;
    top: 0;
    width: 924px;
    height: 787px;
    box-sizing: border-box;
    background: #ece9d8;
    border-right: 4px solid #6a7edc;
    display: flex;
    flex-direction: column;
  }

  .titlebar {
    height: 30px;
    flex: none;
    box-sizing: border-box;
    background: linear-gradient(#a6bcf0 0, #7e9ce2 10%, #7c9ae0 60%, #7694dc 100%);
    display: flex;
    align-items: center;
    padding-left: 5px;
    color: #dfe8fb;
    font-size: 14px;
    white-space: nowrap;
  }

  .title {
    flex: 1;
    min-width: 0;
    overflow: hidden;
  }

  /* the title face is wider than the menu face */
  .title .lat {
    font-size: 13.33px;
    letter-spacing: 0;
  }

  .winbtns {
    display: flex;
    gap: 4px;
    padding-right: 3px;
    flex: none;
  }

  .wb {
    width: 19px;
    height: 20px;
    box-sizing: border-box;
    border: 1px solid #dfe8fb;
    border-radius: 3px;
    background: linear-gradient(135deg, #7f9fee, #4a73d8);
    display: flex;
    align-items: center;
    justify-content: center;
    position: relative;
    flex: none;
  }

  .wb.close {
    background: linear-gradient(135deg, #e0a090, #c86450);
  }

  .w-min {
    position: absolute;
    left: 3px;
    bottom: 3px;
    width: 7px;
    height: 3px;
    background: #fff;
  }

  .w-max {
    width: 11px;
    height: 10px;
    box-sizing: border-box;
    border: 1px solid #fff;
    border-top-width: 3px;
  }

  .menu {
    height: 26px;
    flex: none;
    display: flex;
    align-items: center;
    gap: 10px;
    margin-left: -10px;
    white-space: nowrap;
    color: #222;
    overflow: hidden;
  }

  .face {
    margin-left: 6px;
    flex: none;
  }

  .acct {
    height: 22px;
    flex: none;
    display: flex;
    justify-content: flex-end;
  }

  .email {
    width: 133px;
    box-sizing: border-box;
    background: #f4f2e8;
    padding-left: 6px;
    display: flex;
    align-items: center;
    gap: 6px;
    white-space: nowrap;
  }

  .bar3 {
    height: 27px;
    flex: none;
    display: flex;
    white-space: nowrap;
  }

  .band {
    display: flex;
    align-items: center;
    box-sizing: border-box;
    background: linear-gradient(#f8f7f0, #efecdf);
  }

  .b1 {
    width: 135px;
    padding-left: 10px;
  }

  .b2 {
    width: 552px;
    padding: 0 7px 0 5px;
    gap: 7px;
  }

  .b3 {
    flex: 1;
    padding: 0 4px;
    gap: 5px;
  }

  .tool {
    display: flex;
    align-items: center;
    gap: 4px;
    flex: none;
    color: #222;
  }

  .tool.off {
    color: #b4b4ac;
  }

  .tool.bare {
    gap: 5px;
  }

  .tool.first {
    gap: 2px;
    margin-right: 3px;
  }

  .tool.orb {
    margin-left: 4px;
    gap: 2px;
  }

  .tool .caret {
    margin-left: 3px;
  }

  .saveit {
    margin-left: 6px;
  }

  .b1 .sep {
    margin: 0 6px;
  }

  .more {
    margin-left: auto;
    font: bold 12px "Liberation Sans", sans-serif;
    color: #222;
    position: relative;
    top: -3px;
    flex: none;
  }

  .sep {
    width: 1px;
    height: 20px;
    background: #c8c5b4;
    flex: none;
  }

  .dots {
    width: 2px;
    height: 18px;
    background: repeating-linear-gradient(#aaa 0 2px, transparent 2px 4px);
    flex: none;
  }

  .work {
    flex: 1;
    display: flex;
    min-height: 0;
  }

  .nav {
    width: 148px;
    flex: none;
    display: flex;
    flex-direction: column;
    background: #fff;
    white-space: nowrap;
    overflow: hidden;
  }

  .nav-head {
    height: 19px;
    flex: none;
    box-sizing: border-box;
    background: #ece9d8;
    border-top: 2px solid #ece9d8;
    border-bottom: 3px solid #ece9d8;
    display: flex;
    align-items: center;
    position: relative;
    box-shadow: inset 0 0 0 1px #aca899;
    font-size: 13px;
  }

  .nh-t {
    margin-left: -4px;
  }

  .pin {
    position: absolute;
    left: 116px;
    font-size: 10px;
  }

  .nh-x {
    position: absolute;
    left: 134px;
    font-size: 14px;
    color: #444;
  }

  .nav-tab {
    height: 21px;
    flex: none;
    box-sizing: border-box;
    background: #ece9d8;
    border-bottom: 1px solid #aca899;
    padding-left: 43px;
    line-height: 20px;
    color: #222;
  }

  .nav-tools {
    height: 29px;
    flex: none;
    display: flex;
    align-items: center;
    position: relative;
  }

  .plusg {
    position: absolute;
    left: -5px;
    top: 5px;
    font: bold 16px/16px "Liberation Sans", sans-serif;
    color: #1a6a30;
  }

  .minus {
    position: absolute;
    left: 13px;
    top: 10px;
    width: 16px;
    height: 8px;
    border-top: 2px solid #1a3a40;
    border-bottom: 2px solid #1a3a40;
    box-sizing: border-box;
    clip-path: polygon(0 0, 55% 0, 55% 40%, 100% 40%, 100% 100%, 0 100%);
  }

  .node {
    height: 16px;
    display: flex;
    align-items: center;
    font-size: 13px;
    color: #222;
  }

  .expander {
    width: 8px;
    height: 8px;
    margin-left: -5px;
    border: 1px solid #888;
    flex: none;
    box-sizing: border-box;
  }

  .dash {
    width: 6px;
    border-top: 1px dotted #888;
    flex: none;
  }

  .dash.long {
    width: 11px;
  }

  .nlabel {
    margin-left: 6px;
  }

  .kids {
    margin: -3px 0 0 17px;
    border-left: 1px dotted #888;
    position: relative;
  }

  .kid {
    height: 16.5px;
    display: flex;
    align-items: center;
  }

  .main {
    flex: 1;
    min-width: 0;
    display: flex;
    flex-direction: column;
  }

  .tb {
    height: 26px;
    flex: none;
    box-sizing: border-box;
    background: linear-gradient(#f7f6ef, #efecdf);
    display: flex;
    align-items: center;
    gap: 7px;
    white-space: nowrap;
    padding-right: 5px;
  }

  .r4 {
    padding-left: 6px;
  }

  .r4 .dots {
    margin-right: 2px;
  }

  .r4 .sep {
    margin-right: -2px;
  }

  .r4 .tool .caret {
    margin-left: -2px;
  }

  .r5 {
    padding-left: 205px;
  }

  .combo {
    width: 71px;
    height: 19px;
    box-sizing: border-box;
    margin-left: -1px;
    padding: 0 4px 0 2px;
    background: #fff;
    display: flex;
    align-items: center;
    justify-content: space-between;
    flex: none;
  }

  .r5 .sep {
    margin: 0 -5px 0 -3px;
  }

  .tool.active {
    height: 22px;
    width: 51px;
    box-sizing: border-box;
    padding-left: 4px;
    background: #c9d5ea;
    border: 1px solid #3a5f9e;
  }

  .r5 .tool {
    margin-right: 1px;
  }

  .r5 .tool.active {
    margin-right: -5px;
  }

  .r5 .dots {
    margin: 0 -3px 0 2px;
  }

  .r6 {
    padding-left: 188px;
  }

  .r6 .tool .caret {
    margin-left: 0;
  }

  .cut-label {
    flex: none;
    margin-right: 2px;
  }

  .r6 .sep {
    margin: 0 -1px;
  }

  .blank {
    width: 40px;
    height: 19px;
    margin-left: 2px;
    margin-right: -2px;
    background: #fff;
    flex: none;
  }

  .scene {
    flex: 1;
    min-height: 0;
    width: 771px;
    height: 604px;
    display: block;
  }

  .dims text {
    font-family: "Liberation Sans", sans-serif;
    font-size: 17px;
  }

  /* dialog */
  .dialog {
    position: absolute;
    left: 48px;
    top: 124px;
    width: 287px;
    height: 663px;
    box-sizing: border-box;
    border-left: 4px solid #0c50dc;
    border-right: 4px solid #0c50dc;
    background: #fff;
    white-space: nowrap;
  }

  .d-title {
    height: 23px;
    margin: 0 -2px;
    padding: 0 2px;
    background: linear-gradient(#1a68e8, #0a58e0);
    color: #fff;
    font-weight: bold;
    font-size: 12px;
    display: flex;
    align-items: center;
    justify-content: space-between;
  }

  .d-close {
    width: 13px;
    height: 13px;
    margin-right: 2px;
    box-sizing: border-box;
    border: 1px solid #fff;
    border-radius: 2px;
    background: #e06848;
    display: flex;
    align-items: center;
    justify-content: center;
  }

  table {
    margin-left: 1px;
    width: 276px;
    table-layout: fixed;
    border-collapse: collapse;
  }

  .c0 {
    width: 20px;
  }

  .c1 {
    width: 121px;
  }

  .c2 {
    width: 135px;
  }

  th {
    height: 23px;
    box-sizing: border-box;
    padding: 0;
    font-weight: normal;
    font-size: 12px;
    color: #222;
    background: linear-gradient(#fbfaf5, #e4e1d2);
    border-right: 1px solid #c8c8c8;
    border-bottom: 1px solid #c8c8c8;
  }

  th.hv {
    color: #800040;
    background: linear-gradient(#f8e4bc, #efb45c);
  }

  td {
    height: 19px;
    box-sizing: border-box;
    padding: 0;
    border-right: 1px solid #c8c8c8;
    border-bottom: 1px solid #c8c8c8;
    line-height: 16px;
    overflow: hidden;
    color: #222;
  }

  .num {
    background: #ecead9;
    text-align: center;
    font-size: 13px;
  }

  .num.cur {
    background: #f8cc90;
    color: #a03000;
  }

  .name {
    padding-left: 21px;
    position: relative;
  }

  .name.blue {
    color: #1010c0;
  }

  .name.group {
    color: #999;
  }

  .name.sub {
    padding-left: 30px;
  }

  .name.cur {
    background: #316ac5;
    color: #fff;
  }

  .name.sub::before {
    content: "";
    position: absolute;
    left: 9px;
    top: 9px;
    width: 17px;
    border-top: 1px solid #aaa;
  }

  .name.sub::after {
    content: "";
    position: absolute;
    left: 9px;
    top: 0;
    height: 100%;
    border-left: 1px solid #aaa;
  }

  .name.sub.last::after {
    height: 9px;
  }

  .minusbox {
    position: absolute;
    left: 3px;
    top: 3px;
    width: 12px;
    height: 12px;
    box-sizing: border-box;
    border: 1px solid #aaa;
    background: linear-gradient(#333, #333) center / 6px 1px no-repeat #fff;
  }

  .val {
    padding-left: 1px;
    position: relative;
  }

  .picked {
    background: #3f72c8;
    color: #dfe8f8;
  }

  .drop {
    position: absolute;
    left: 119px;
    top: 2px;
    width: 14px;
    height: 15px;
    background: #c1d3f8;
    display: flex;
    align-items: center;
    justify-content: center;
  }

  .swatch {
    display: block;
    margin: 0 0 0 4px;
    width: 125px;
    height: 13px;
    box-sizing: border-box;
    border: 1px solid #000;
    background: #ffff00;
  }
</style>
